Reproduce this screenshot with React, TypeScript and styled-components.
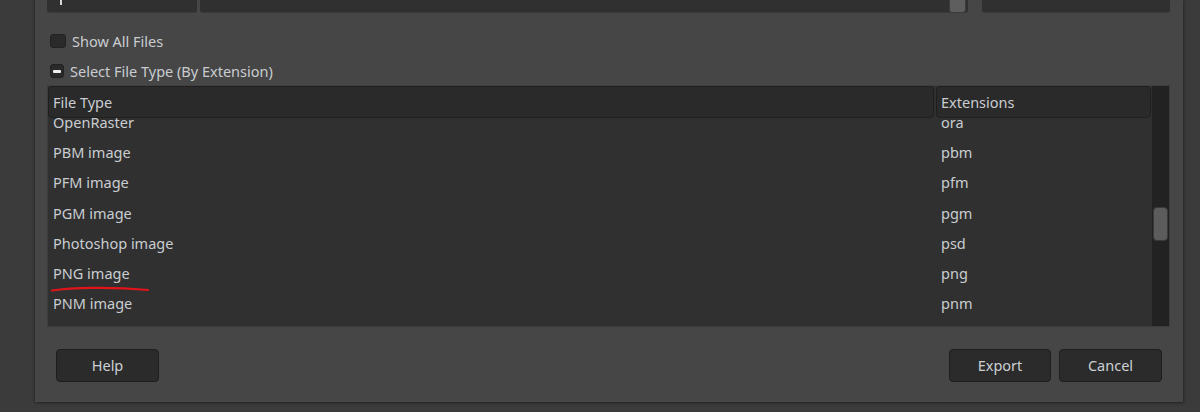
import React from "react";
import styled, { createGlobalStyle } from "styled-components";

const Global = createGlobalStyle`
  html, body { margin: 0; padding: 0; background: #3b3b3b; }
  body { font-family: "Noto Sans", "Open Sans", sans-serif; font-size: 14.5px; color: #ccd0d4; overflow: hidden; }
  * { box-sizing: border-box; }
`;

const Page = styled.div`
  width: 1200px;
  height: 412px;
  background: #3b3b3b;
`;

const Panel = styled.div`
  margin-left: 35px;
  width: 1148px;
  height: 402px;
  background: #464646;
  box-shadow: 1px 1px 3px rgba(0, 0, 0, 0.35), -1px 0 2px rgba(0, 0, 0, 0.25);
  padding: 0 13px 0 12px;
  display: flex;
  flex-direction: column;
`;

const TopRow = styled.div`
  height: 13px;
  display: flex;
  gap: 3px;
`;

const Field = styled.div<{ $w?: number; $ml?: number }>`
  position: relative;
  height: 13px;
  ${(p) => (p.$w ? `width: ${p.$w}px; flex: none;` : "flex: 1;")}
  margin-left: ${(p) => p.$ml ?? 0}px;
  background: #303030;
  border-radius: 0 0 3px 3px;
  border-bottom: 1px solid #3a3a3a;
`;

const Caret = styled.span`
  position: absolute;
  left: 13px;
  top: 0;
  width: 2px;
  height: 5px;
  background: #d8d8d8;
`;

const ScrollThumbH = styled.span`
  position: absolute;
  right: 2px;
  top: 0;
  width: 17px;
  height: 13px;
  background: #5e5e5e;
  border: 1px solid #3a3a3a;
  border-top: none;
  border-radius: 0 0 3px 3px;
`;

const CheckRow = styled.label<{ $mt: number }>`
  display: flex;
  align-items: center;
  gap: 6px;
  margin-top: ${(p) => p.$mt}px;
  margin-left: 3px;
  height: 16px;
  color: #c9cdd1;
`;

const Box = styled.span<{ $w: number }>`
  width: ${(p) => p.$w}px;
  height: 14px;
  border-radius: 3px;
  background: #2a2a2a;
  border: 1px solid #222;
  display: flex;
  align-items: center;
  justify-content: center;
`;

const Dash = styled.span`
  width: 8px;
  height: 3px;
  background: #f0f0f0;
  border-radius: 1px;
`;

const Table = styled.div`
  margin-top: 6px;
  height: 242px;
  border: 1px solid #3c3c3c;
  border-top-color: #404040;
  background: #303030;
  display: grid;
  grid-template-columns: 1fr 17px;
  column-gap: 1px;
  overflow: hidden;
`;

const Main = styled.div`
  display: flex;
  flex-direction: column;
  min-width: 0;
  overflow: hidden;
`;

const Cols = `grid-template-columns: 886px 215px;`;

const Header = styled.div`
  display: grid;
  ${Cols}
  column-gap: 2px;
  height: 32px;
  flex: none;
  position: relative;
  z-index: 1;
  background: #303030;
`;

const HeadCell = styled.div`
  background: #2a2a2a;
  border: 1px solid #1f1f1f;
  border-radius: 4px;
  padding-left: 4px;
  display: flex;
  align-items: center;
  padding-bottom: 1px;
  color: #c9cdd1;
`;

const Body = styled.div`
  flex: 1;
  overflow: hidden;
`;

const Rows = styled.div`
  margin-top: -11px;
`;

const Row = styled.div`
  display: grid;
  ${Cols}
  column-gap: 2px;
  height: 30.2px;
  align-items: center;
  position: relative;
`;

const Cell = styled.div`
  padding-left: 5px;
  color: #c9cdd1;
`;

const Track = styled.div`
  background: #222;
  position: relative;
`;

const Thumb = styled.span`
  position: absolute;
  left: 1px;
  top: 121px;
  width: 15px;
  height: 34px;
  border-radius: 4px;
  background: #5c5c5c;
  border: 1px solid #3a3a3a;
`;

const Squiggle = styled.svg`
  position: absolute;
  left: 3px;
  top: 28px;
  overflow: visible;
`;

const Footer = styled.div`
  margin-top: 22px;
  display: flex;
  align-items: center;
  padding: 0 8px 0 9px;
  gap: 8px;
`;

const Spacer = styled.div`
  flex: 1;
`;

const Button = styled.button<{ $w: number }>`
  width: ${(p) => p.$w}px;
  height: 33px;
  background: #2b2b2b;
  border: 1px solid #1e1e1e;
  border-radius: 4px;
  color: #ccd0d4;
  font-family: inherit;
  font-size: 14.5px;
  padding: 0 0 1px;
`;

const rows: [string, string][] = [
  ["OpenRaster", "ora"],
  ["PBM image", "pbm"],
  ["PFM image", "pfm"],
  ["PGM image", "pgm"],
  ["Photoshop image", "psd"],
  ["PNG image", "png"],
  ["PNM image", "pnm"],
  ["Portable Pixmap", "ppm"],
];

export default function App() {
  return (
    <Page>
      <Global />
      <Panel>
        <TopRow>
          <Field $w={150}>
            <Caret />
          </Field>
          <Field>
            <ScrollThumbH />
          </Field>
          <Field $w={188} $ml={11} />
        </TopRow>
        <CheckRow $mt={20}>
          <Box $w={16} />
          Show All Files
        </CheckRow>
        <CheckRow $mt={14}>
          <Box $w={14}>
            <Dash />
          </Box>
          Select File Type (By Extension)
        </CheckRow>
        <Table>
          <Main>
            <Header>
              <HeadCell>File Type</HeadCell>
              <HeadCell>Extensions</HeadCell>
            </Header>
            <Body>
              <Rows>
                {rows.map(([name, ext]) => (
                  <Row key={ext}>
                    <Cell>{name}</Cell>
                    <Cell>{ext}</Cell>
                    {ext === "png" && (
                      <Squiggle width="100" height="8" viewBox="0 0 100 8">
                        <path
                          d="M1 4.5 C 20 1.5, 60 0.5, 97 4"
                          fill="none"
                          stroke="#e0141a"
                          strokeWidth="2.2"
                          strokeLinecap="round"
                        />
                      </Squiggle>
                    )}
                  </Row>
                ))}
              </Rows>
            </Body>
          </Main>
          <Track>
            <Thumb />
          </Track>
        </Table>
        <Footer>
          <Button $w={103}>Help</Button>
          <Spacer />
          <Button $w={102}>Export</Button>
          <Button $w={103}>Cancel</Button>
        </Footer>
      </Panel>
    </Page>
  );
}
